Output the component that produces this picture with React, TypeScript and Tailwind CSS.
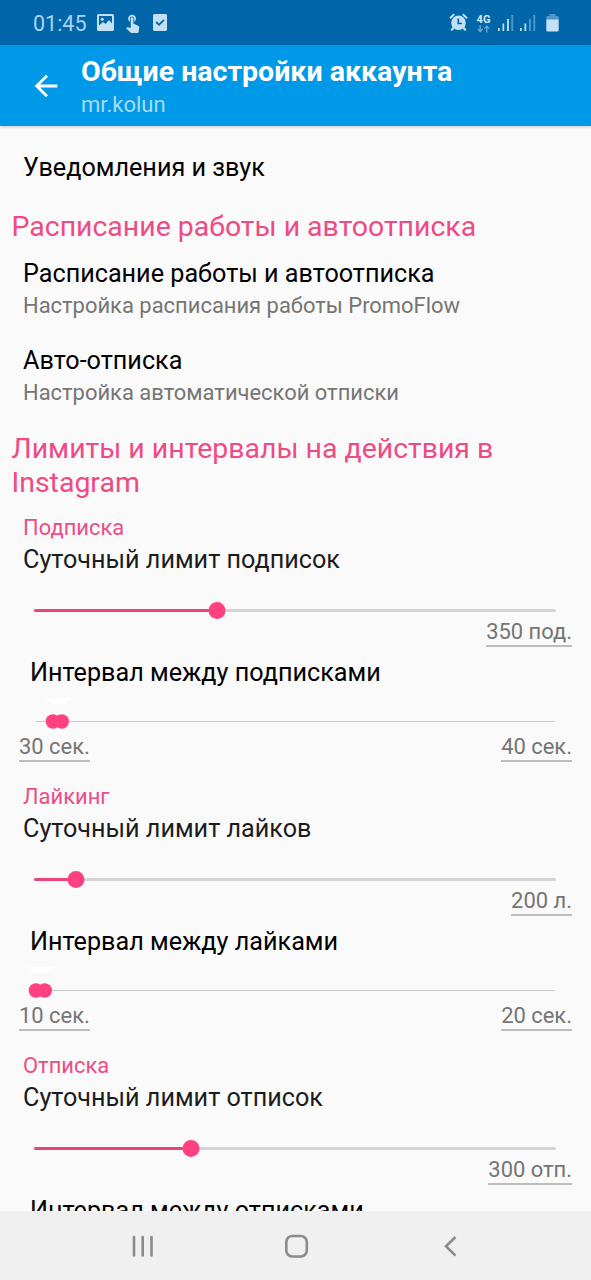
import { MdArrowBack, MdTouchApp } from 'react-icons/md';

type Group = {
  title: string;
  limitLabel: string;
  limit: string;
  limitX: number;
  intervalLabel: string;
  range?: { from: string; to: string; x: number };
};

const groups: Group[] = [
  {
    title: 'Подписка',
    limitLabel: 'Суточный лимит подписок',
    limit: '350 под.',
    limitX: 183,
    intervalLabel: 'Интервал между подписками',
    range: { from: '30 сек.', to: '40 сек.', x: 18 },
  },
  {
    title: 'Лайкинг',
    limitLabel: 'Суточный лимит лайков',
    limit: '200 л.',
    limitX: 42,
    intervalLabel: 'Интервал между лайками',
    range: { from: '10 сек.', to: '20 сек.', x: 0.5 },
  },
  {
    title: 'Отписка',
    limitLabel: 'Суточный лимит отписок',
    limit: '300 отп.',
    limitX: 156.5,
    intervalLabel: 'Интервал между отписками',
  },
];

function StatusBar() {
  return (
    <div className="flex h-[45px] shrink-0 items-center bg-[#0066a9] text-[#c3e0f5]">
      <span className="ml-[33px] w-[64px] pt-[2px] text-[21.500px] leading-[26px] text-[#a9d3ef]">01:45</span>
      {/* Picture */}
      <svg width="17" height="17" viewBox="0 0 17 17">
        <rect width="17" height="17" rx="1.500" fill="currentColor" />
        <path d="M2 11.500V2h13v7.500l-3-3.500-3.500 4L6 8z" fill="#0066a9" />
        <circle cx="5.200" cy="5.200" r="1.500" fill="currentColor" />
      </svg>
      <MdTouchApp className="ml-[8px] size-[21px]" />
      <svg className="ml-[10px]" width="14" height="18" viewBox="0 0 14 18">
        <path d="M1 0h12l1 1v15l-1 1H1l-1-1V1z" fill="currentColor" />
        <path d="M3.200 8l2.800 2.800 5-5" fill="none" stroke="#0066a9" strokeWidth="1.800" />
      </svg>

      {/* Alarm */}
      <svg className="ml-auto" width="19" height="19" viewBox="0 0 19 19" fill="none" stroke="currentColor">
        <circle cx="9.500" cy="9.800" r="7.300" fill="currentColor" stroke="none" />
        <path d="M1 5.200l4.200-3.900M18 5.200l-4.200-3.900" strokeWidth="2" />
        <path d="M4.500 14.800l-2.200 2.600M14.500 14.800l2.200 2.600" strokeWidth="2.200" />
        <path d="M9.300 5.500v5h3.800" stroke="#0066a9" strokeWidth="1.700" />
      </svg>
      {/* Mobile data */}
      <div className="ml-[8px] flex w-[15px] flex-col items-center pt-px">
        <span className="text-[11px] leading-[11px] font-bold text-[#d5e9f7]">4G</span>
        <svg width="13" height="8" viewBox="0 0 13 8" fill="none" stroke="#6aa6cf" strokeWidth="1.400">
          <path d="M3.200 0v6.500M.8 4l2.400 2.700L5.600 4M9.800 7.500V1M7.400 3.600L9.800 1l2.400 2.600" />
        </svg>
      </div>
      <svg className="ml-[7px]" width="16" height="18" viewBox="0 0 16 18" fill="currentColor">
        <path d="M0 14h1.700v3H0zM4.500 9.500h1.700V17H4.500zM9 5h1.900v12H9z" />
        <path d="M13.300 1h1.900v16h-1.900z" opacity=".4" />
      </svg>
      <svg className="ml-[6px]" width="16" height="18" viewBox="0 0 16 18" fill="currentColor">
        <path d="M0 14h1.700v3H0zM4.500 9.500h1.700V17H4.500z" />
        <path d="M9 5h1.900v12H9zM13.300 1h1.900v16h-1.900z" opacity=".4" />
      </svg>
      <svg className="mr-[32px] ml-[10px]" width="13" height="18" viewBox="0 0 13 18" fill="currentColor">
        <path d="M3.500 0h6v2H12l.7 1v3H.3V3L1 2h2.500z" opacity=".4" />
        <path d="M.3 5.500h12.400v11l-1 1H1.300l-1-1z" />
      </svg>
    </div>
  );
}

function Header() {
  return (
    <header className="z-10 flex h-[81px] shrink-0 items-center bg-[#0099e8] shadow-[0_1px_3px_rgba(0,0,0,0.2)]">
      <MdArrowBack className="ml-[29px] size-[34px] shrink-0 text-white" />
      <div className="ml-[18px] pt-[5px]">
        <h1 className="text-[28.550px] leading-[33px] font-bold whitespace-nowrap text-white">
          Общие настройки аккаунта
        </h1>
        <p className="mt-px text-[22px] leading-[32px] text-[#a6dcf8]">mr.kolun</p>
      </div>
    </header>
  );
}

function Section({ children }: { children: string }) {
  return <h2 className="px-[11.500px] text-[28.450px] leading-[34px] text-[#ef4a84]">{children}</h2>;
}

function Item({ title, subtitle }: { title: string; subtitle?: string }) {
  return (
    <div className="px-[23px]">
      <p className="text-[25.200px] leading-[30px] text-black">{title}</p>
      {subtitle && <p className="mt-[4px] text-[21.950px] leading-[26px] text-[#757575]">{subtitle}</p>}
    </div>
  );
}

function Value({ children }: { children: string }) {
  return (
    <span className="h-[28px] border-b-2 border-[#bdbdbd] text-[21.950px] leading-[26px] text-[#757575]">
      {children}
    </span>
  );
}

function LimitGroup({ group }: { group: Group }) {
  const { range } = group;

  return (
    <section className="h-[269px] shrink-0">
      <h3 className="px-[23px] text-[21.950px] leading-[26px] text-[#ec4d85]">{group.title}</h3>
      <p className="mt-[4px] px-[23px] text-[25.200px] leading-[30px] text-[#1c1c1c]">{group.limitLabel}</p>

      <div className="relative mt-[34px] mr-[35px] ml-[34px] h-[3px] rounded-full bg-[#d5d5d5]">
        <div className="h-full rounded-full bg-[#ee4280]" style={{ width: group.limitX }} />
        <div
          className="absolute -top-[7px] size-[17px] -translate-x-1/2 rounded-full bg-[#ff4081]"
          style={{ left: group.limitX }}
        />
      </div>
      <div className="mt-[7px] flex justify-end pr-[19px]">
        <Value>{group.limit}</Value>
      </div>

      <p className="mt-[11px] px-[30px] text-[25.200px] leading-[30px] text-black">{group.intervalLabel}</p>

      {range && (
        <>
          <div className="relative mt-[33px] mr-[36px] ml-[36px] h-px bg-[#c9c9c9]">
            <svg
              className="absolute -top-[23px]"
              style={{ left: range.x - 9 }}
              width="26"
              height="31"
              viewBox="0 0 26 31"
            >
              <path d="M0 0h26l-7 6-3 1-3-2-3 2-3-1z" fill="#fff" />
              <circle cx="8" cy="23.500" r="7.300" fill="#ff4081" />
              <circle cx="16.700" cy="23.500" r="7.300" fill="#ff4081" />
            </svg>
          </div>
          <div className="mt-[12px] flex justify-between px-[19px]">
            <Value>{range.from}</Value>
            <Value>{range.to}</Value>
          </div>
        </>
      )}
    </section>
  );
}

function NavBar() {
  return (
    <nav className="z-10 h-[69px] shrink-0 bg-[#f0f0f0]">
      <svg width="591" height="69" viewBox="0 0 591 69" fill="none" stroke="#8b8b8b" strokeLinecap="round">
        <path d="M134 26v18.500M142.700 26v18.500M151.500 26v18.500" strokeWidth="2.600" />
        <rect x="286.300" y="25" width="20.500" height="20.500" rx="6" strokeWidth="2.600" />
        <path d="M455.500 26l-9.500 9.300 9.500 9.300" strokeWidth="2.600" strokeLinecap="butt" />
      </svg>
    </nav>
  );
}

export default function App() {
  return (
    <div className="flex h-[1280px] w-[591px] flex-col overflow-hidden bg-[#fafafa] font-['Roboto',sans-serif]">
      <StatusBar />
      <Header />
      <main className="flex min-h-0 flex-1 flex-col overflow-hidden pt-[27px]">
        <Item title="Уведомления и звук" />
        <div className="mt-[27px]">
          <Section>Расписание работы и автоотписка</Section>
        </div>
        <div className="mt-[15px] mb-[25px] flex flex-col gap-[27px]">
          <Item title="Расписание работы и автоотписка" subtitle="Настройка расписания работы PromoFlow" />
          <Item title="Авто-отписка" subtitle="Настройка автоматической отписки" />
        </div>
        <div className="mt-px mb-[15px]">
          <Section>Лимиты и интервалы на действия в Instagram</Section>
        </div>
        {groups.map((group) => (
          <LimitGroup key={group.title} group={group} />
        ))}
      </main>
      <NavBar />
    </div>
  );
}
